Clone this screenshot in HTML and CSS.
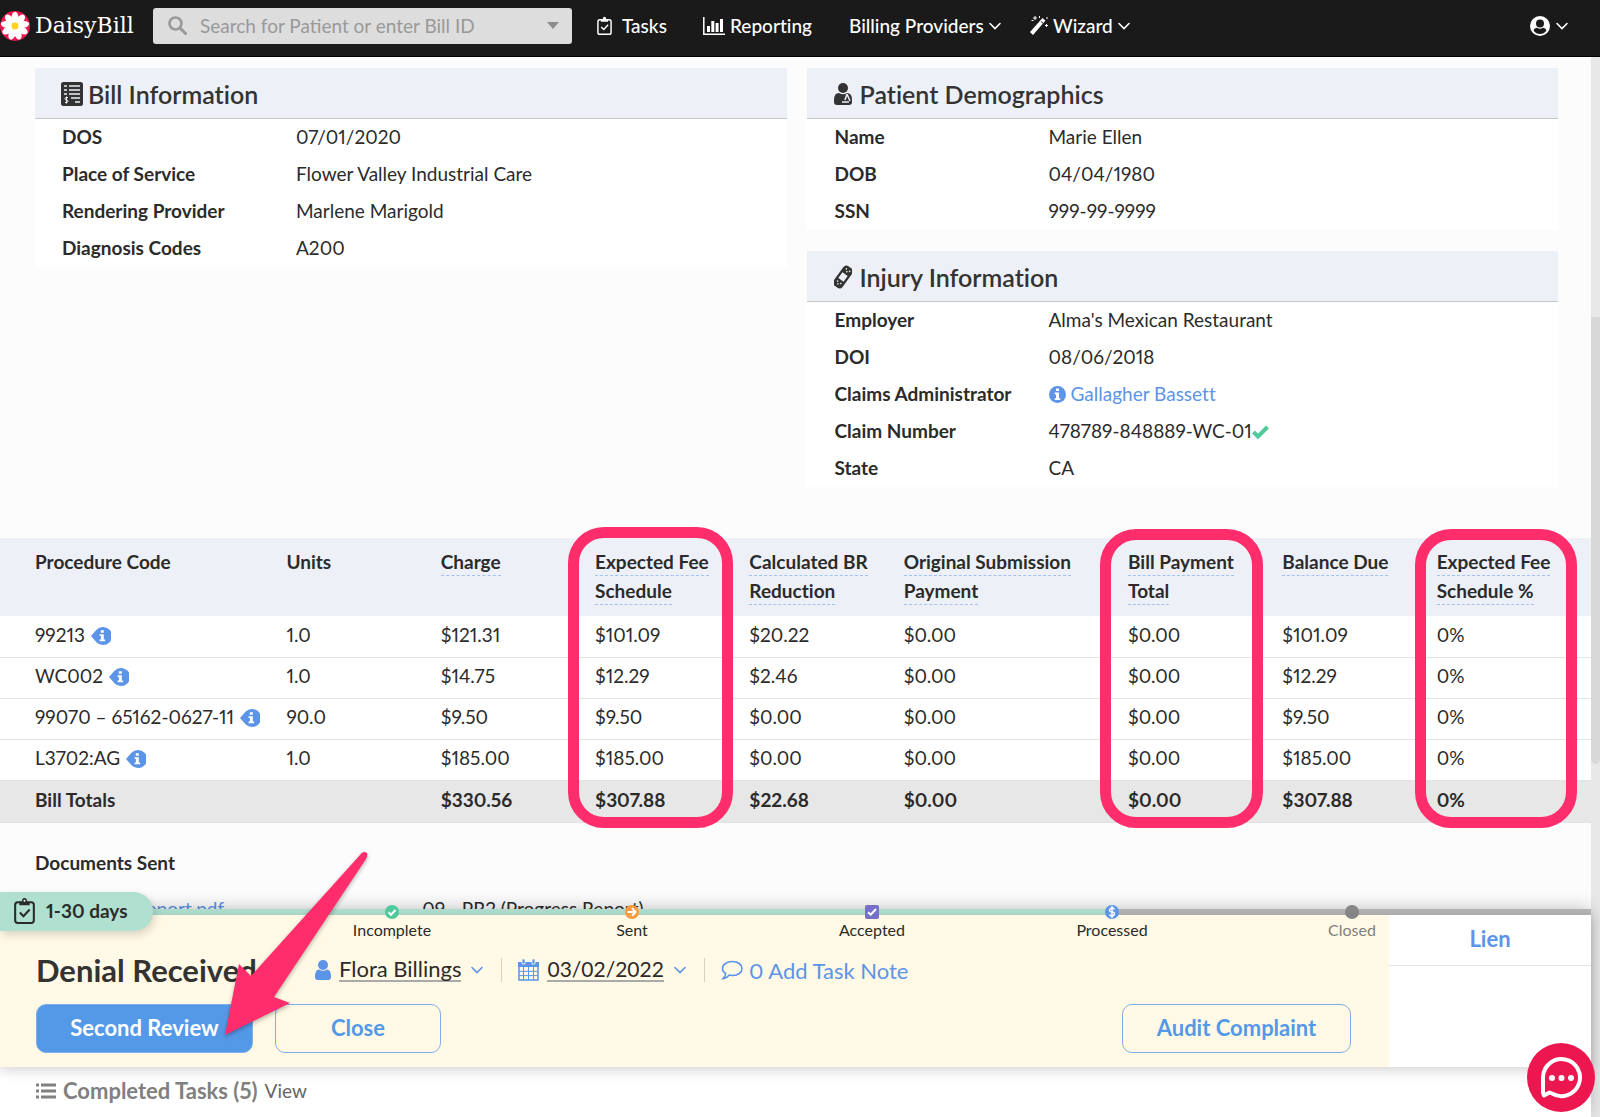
FILE: index.html
```html
<!DOCTYPE html>
<html lang="en">
<head>
    <meta charset="UTF-8">
    <meta name="viewport" content="width=device-width, initial-scale=1.0">
    <title>DaisyBill</title>
    <link rel="stylesheet" href="styles.css">
</head>
<body>
    <!-- shared icons -->
    <svg class="sprite" aria-hidden="true">
        <symbol id="chevron" viewBox="0 0 12 8"><path d="M1 1.5l5 5 5-5" fill="none" stroke="currentColor" stroke-width="1.6" stroke-linecap="round"/></symbol>
        <symbol id="clipboard" viewBox="0 0 20 26"><path d="M3.500 5H16.500Q19 5 19 7.500V22.500Q19 25 16.500 25H3.500Q1 25 1 22.500V7.500Q1 5 3.500 5Z" fill="none" stroke="currentColor" stroke-width="2"/><path d="M5 8V4.500H7.500Q7.500 1 10 1T12.500 4.500H15V8Z" fill="currentColor"/><circle cx="10" cy="3.600" r="1" fill="#fff"/><path d="M5.500 15l3.500 3.500 6-6.500" fill="none" stroke="currentColor" stroke-width="2"/></symbol>
        <symbol id="tag" viewBox="0 0 20 18"><path d="M0 9L5.500 2.800A9 9 0 1 1 5.500 15.200Z" fill="#5c94e8"/><path d="M9.800 3.200h3v2.600h-3zM8.600 7.200h4.200v5.400h1.300v1.700H8.600v-1.700h1.300V8.900H8.600z" fill="#fff"/></symbol>
    </svg>

    <header class="topbar">
        <a class="logo" href="#">
            <svg width="30" height="32" viewBox="0 0 30 32">
                <circle cx="15" cy="16" r="15" fill="#ed174f"/>
                <g fill="#fff">
                    <ellipse cx="15" cy="7.500" rx="3.400" ry="5.800"/>
                    <ellipse cx="15" cy="7.500" rx="3.400" ry="5.800" transform="rotate(40 15 16)"/>
                    <ellipse cx="15" cy="7.500" rx="3.400" ry="5.800" transform="rotate(80 15 16)"/>
                    <ellipse cx="15" cy="7.500" rx="3.400" ry="5.800" transform="rotate(120 15 16)"/>
                    <ellipse cx="15" cy="7.500" rx="3.400" ry="5.800" transform="rotate(160 15 16)"/>
                    <ellipse cx="15" cy="7.500" rx="3.400" ry="5.800" transform="rotate(200 15 16)"/>
                    <ellipse cx="15" cy="7.500" rx="3.400" ry="5.800" transform="rotate(240 15 16)"/>
                    <ellipse cx="15" cy="7.500" rx="3.400" ry="5.800" transform="rotate(280 15 16)"/>
                    <ellipse cx="15" cy="7.500" rx="3.400" ry="5.800" transform="rotate(320 15 16)"/>
                </g>
                <circle cx="15" cy="16" r="3.400" fill="#ffd21a"/>
            </svg>
            <span>DaisyBill</span>
        </a>
        <label class="search" for="search">
            <svg width="19" height="19" viewBox="0 0 19 19"><circle cx="7.500" cy="7.500" r="6" fill="none" stroke="#999" stroke-width="2.600"/><path d="M12 12l5.500 5.500" stroke="#999" stroke-width="3" stroke-linecap="round"/></svg>
            <input type="text" id="search" placeholder="Search for Patient or enter Bill ID">
            <svg width="12" height="7" viewBox="0 0 12 7"><path d="M0 0h12L6 7z" fill="#8c8c8c"/></svg>
        </label>
        <nav class="nav">
            <a class="navTasks" href="#"><svg width="15" height="19"><use href="#clipboard"/></svg>Tasks</a>
            <a class="navReporting" href="#"><svg width="22" height="18" viewBox="0 0 22 18"><path d="M.800 0v17.200H22" fill="none" stroke="#fff" stroke-width="1.500"/><path d="M4 9h3v6H4zM8.300 4h3v11h-3zM12.600 6h3v9h-3zM17 2h3v13h-3z" fill="#fff"/></svg>Reporting</a>
            <a class="navProviders" href="#">Billing Providers<svg width="12" height="8"><use href="#chevron"/></svg></a>
            <a class="navWizard" href="#"><svg width="18" height="19" viewBox="0 0 18 19"><path d="M0 16L12.500 2l3 2.600L3 19z" fill="#fff"/><path d="M11 5.500l2.600 2.300" stroke="#1a1a1a"/><path d="M5 0v4M3 2h4M9.500 0v2M1.500 4.500h2M16.500 8v3M15 9.500h3M17 1v2" stroke="#fff" stroke-width="1"/></svg>Wizard<svg width="12" height="8"><use href="#chevron"/></svg></a>
        </nav>
        <button class="account" aria-label="Account">
            <svg width="20" height="20" viewBox="0 0 20 20"><circle cx="10" cy="10" r="10" fill="#fff"/><circle cx="10" cy="7.500" r="4" fill="#1a1a1a"/><path d="M3.500 14.500Q4.500 11.500 7 11.700Q10 13.800 13 11.700Q15.500 11.500 16.500 14.500Q14 18 10 18T3.500 14.500Z" fill="#1a1a1a"/></svg>
            <svg width="12" height="8"><use href="#chevron"/></svg>
        </button>
    </header>

    <div class="shell">
        <div class="page">
            <main class="content">
                <div class="panels">
                    <div class="column">
                        <section class="panel bill">
                            <h2><svg width="22" height="24" viewBox="0 0 22 24"><rect width="22" height="24" rx="2.500" fill="#333"/><path d="M3 4h3M8 4h11M3 8h3M8 8h11M3 12h3M8 12h11M10 16h9M14 20h5" stroke="#edf1f7" stroke-width="1.500"/><path d="M7 15.500H5.500Q4 15.500 4 16.700T5.500 18T7 19.200T5.500 20.500H4M5.500 14.500v7" fill="none" stroke="#edf1f7" stroke-width="1"/></svg>Bill Information</h2>
                            <dl>
                                <dt>DOS</dt><dd>07/01/2020</dd>
                                <dt>Place of Service</dt><dd>Flower Valley Industrial Care</dd>
                                <dt>Rendering Provider</dt><dd>Marlene Marigold</dd>
                                <dt>Diagnosis Codes</dt><dd>A200</dd>
                            </dl>
                        </section>
                    </div>
                    <div class="column">
                        <section class="panel">
                            <h2><svg width="18" height="22" viewBox="0 0 18 22"><circle cx="9" cy="5" r="5" fill="#333"/><path d="M0 17Q0 10 5 10Q9 12.500 13 10Q18 10 18 17V19Q18 22 15 22H3Q0 22 0 19Z" fill="#333"/><path d="M13 11l-2 6M13 11l3 7M8 19h7" stroke="#edf1f7" stroke-width="1.500"/></svg>Patient Demographics</h2>
                            <dl>
                                <dt>Name</dt><dd>Marie Ellen</dd>
                                <dt>DOB</dt><dd>04/04/1980</dd>
                                <dt>SSN</dt><dd>999-99-9999</dd>
                            </dl>
                        </section>
                        <section class="panel">
                            <h2><svg width="18" height="24" viewBox="0 0 18 24"><g transform="rotate(36 9 12)"><rect x="3.500" y="0" width="11" height="24" rx="4" fill="#333"/><rect x="5.800" y="8.500" width="6.400" height="7" fill="#edf1f7"/><g fill="#edf1f7"><circle cx="7" cy="3.500" r=".800"/><circle cx="11" cy="3.500" r=".800"/><circle cx="9" cy="5.500" r=".800"/><circle cx="7" cy="18.500" r=".800"/><circle cx="11" cy="18.500" r=".800"/><circle cx="9" cy="20.500" r=".800"/></g></g></svg>Injury Information</h2>
                            <dl>
                                <dt>Employer</dt><dd>Alma's Mexican Restaurant</dd>
                                <dt>DOI</dt><dd>08/06/2018</dd>
                                <dt>Claims Administrator</dt><dd><a href="#"><svg class="infoDot" width="17" height="17" viewBox="0 0 17 17"><circle cx="8.500" cy="8.500" r="8.500" fill="#5c94e8"/><path d="M7 2.500h3v2.600H7zM5.700 6.600H10v5.600h1.300V14H5.700v-1.800H7V8.400H5.700z" fill="#fff"/></svg>Gallagher Bassett</a></dd>
                                <dt>Claim Number</dt><dd>478789-848889-WC-01<svg class="valid" width="17" height="14" viewBox="0 0 17 14"><path d="M1.500 7l4.500 4.500L15.500 2" fill="none" stroke="#50ca9b" stroke-width="4"/></svg></dd>
                                <dt>State</dt><dd>CA</dd>
                            </dl>
                        </section>
                    </div>
                </div>

                <div class="procedures">
                    <table>
                        <colgroup>
                            <col class="codeCol"><col><col><col><col><col class="wideCol"><col><col><col>
                        </colgroup>
                        <thead>
                            <tr>
                                <th>Procedure Code</th>
                                <th>Units</th>
                                <th><span>Charge</span></th>
                                <th><span>Expected Fee Schedule</span></th>
                                <th><span>Calculated BR Reduction</span></th>
                                <th><span>Original Submission Payment</span></th>
                                <th><span>Bill Payment Total</span></th>
                                <th><span>Balance Due</span></th>
                                <th><span>Expected Fee Schedule %</span></th>
                            </tr>
                        </thead>
                        <tbody>
                            <tr><td>99213<svg class="tag" width="20" height="18"><use href="#tag"/></svg></td><td>1.0</td><td>$121.31</td><td>$101.09</td><td>$20.22</td><td>$0.00</td><td>$0.00</td><td>$101.09</td><td>0%</td></tr>
                            <tr><td>WC002<svg class="tag" width="20" height="18"><use href="#tag"/></svg></td><td>1.0</td><td>$14.75</td><td>$12.29</td><td>$2.46</td><td>$0.00</td><td>$0.00</td><td>$12.29</td><td>0%</td></tr>
                            <tr><td>99070 – 65162-0627-11<svg class="tag" width="20" height="18"><use href="#tag"/></svg></td><td>90.0</td><td>$9.50</td><td>$9.50</td><td>$0.00</td><td>$0.00</td><td>$0.00</td><td>$9.50</td><td>0%</td></tr>
                            <tr><td>L3702:AG<svg class="tag" width="20" height="18"><use href="#tag"/></svg></td><td>1.0</td><td>$185.00</td><td>$185.00</td><td>$0.00</td><td>$0.00</td><td>$0.00</td><td>$185.00</td><td>0%</td></tr>
                        </tbody>
                        <tfoot>
                            <tr><td>Bill Totals</td><td></td><td>$330.56</td><td>$307.88</td><td>$22.68</td><td>$0.00</td><td>$0.00</td><td>$307.88</td><td>0%</td></tr>
                        </tfoot>
                    </table>
                    <div class="ring ringFee"></div>
                    <div class="ring ringPayment"></div>
                    <div class="ring ringPercent"></div>
                </div>

                <section class="documents">
                    <h3>Documents Sent</h3>
                    <div class="docRow">
                        <a href="#">report.pdf</a>
                        <span>09 - PR2 (Progress Report)</span>
                    </div>
                </section>
            </main>

            <footer class="dock">
                <div class="line"></div>
                <div class="badge"><svg width="21" height="27"><use href="#clipboard"/></svg>1-30 days</div>
                <div class="dockBody">
                    <div class="task">
                        <ol class="steps">
                            <li><svg width="14" height="14" viewBox="0 0 14 14"><circle cx="7" cy="7" r="7" fill="#50ca9b"/><path d="M3.500 7.200l2.500 2.500 4.500-4.700" fill="none" stroke="#fff" stroke-width="2"/></svg>Incomplete</li>
                            <li><svg width="14" height="14" viewBox="0 0 14 14"><circle cx="7" cy="7" r="7" fill="#fb9a3c"/><path d="M2.500 7h8M7 3.300L10.700 7 7 10.700" fill="none" stroke="#fff" stroke-width="2"/></svg>Sent</li>
                            <li><svg width="14" height="14" viewBox="0 0 14 14"><rect width="14" height="14" rx="2" fill="#766fc8"/><path d="M3 7.200l2.800 2.500L11 4" fill="none" stroke="#fff" stroke-width="2"/></svg>Accepted</li>
                            <li><svg width="14" height="14" viewBox="0 0 14 14"><circle cx="7" cy="7" r="7" fill="#5c94e8"/><path d="M9.500 4.500Q9 3 7 3T4.600 5T7 7T9.400 9T7 11T4.500 9.500M7 1v12" fill="none" stroke="#fff" stroke-width="1.500"/></svg>Processed</li>
                            <li class="pending"><svg width="14" height="14" viewBox="0 0 14 14"><circle cx="7" cy="7" r="7" fill="#858585"/></svg>Closed</li>
                        </ol>
                        <div class="taskInfo">
                            <h1>Denial Received</h1>
                            <button class="picker"><svg width="16" height="20" viewBox="0 0 16 20"><circle cx="8" cy="5" r="5" fill="#5c94e8"/><path d="M0 17Q0 9.500 4 9.500Q8 12 12 9.500Q16 9.500 16 17Q16 20 13.500 20H2.500Q0 20 0 17Z" fill="#5c94e8"/></svg><span>Flora Billings</span><svg class="arrow" width="12" height="8"><use href="#chevron"/></svg></button>
                            <button class="picker dueDate"><svg width="21" height="22" viewBox="0 0 21 22"><path d="M1 4h19v17H1z" fill="none" stroke="#5c94e8" stroke-width="1.500"/><path d="M0 3h21v5H0z" fill="#5c94e8"/><path d="M4 0h3v5H4zM14 0h3v5h-3z" fill="#5c94e8" stroke="#fff9e5" stroke-width=".800"/><path d="M5.500 8v13M10.500 8v13M15.500 8v13M1 12.300h19M1 16.600h19" stroke="#5c94e8"/></svg><span>03/02/2022</span><svg class="arrow" width="12" height="8"><use href="#chevron"/></svg></button>
                            <a class="note" href="#"><svg width="22" height="20" viewBox="0 0 22 20"><path d="M11.500 1.500C17 1.500 21 4.500 21 8.500S17 15.500 11.500 15.500Q9.800 15.500 8.300 15.100Q5.500 18.500 2 18.700Q4.500 16.500 4.700 13.500Q1.500 11.500 1.500 8.500C1.500 4.500 6 1.500 11.500 1.500Z" fill="none" stroke="#5c94e8" stroke-width="1.600"/></svg>0 Add Task Note</a>
                        </div>
                        <div class="actions">
                            <button class="btn primary">Second Review</button>
                            <button class="btn close">Close</button>
                            <button class="btn audit">Audit Complaint</button>
                        </div>
                    </div>
                    <aside class="lien"><a href="#">Lien</a></aside>
                </div>
                <div class="completed">
                    <svg width="20" height="16" viewBox="0 0 20 16"><path d="M0 2h3M5 2h15M0 8h3M5 8h15M0 14h3M5 14h15" stroke="#808080" stroke-width="3"/></svg>
                    <strong>Completed Tasks (5)</strong>
                    <a href="#">View</a>
                </div>
                <svg class="pointer" width="160" height="200" viewBox="0 0 160 200"><path d="M9 192L23 121L35 133L144 12Q147 7 151 10Q152 13 150 16L58 154L74 160Z" fill="#ff2d6c"/></svg>
            </footer>
        </div>
        <div class="scrollTrack"><div class="scrollThumb"></div></div>
    </div>

    <button class="chat" aria-label="Chat"><svg width="44" height="46" viewBox="0 0 44 46"><path d="M4 37.500V22A18.500 18.500 0 1 1 13 38.500L10.500 37.500L5 40.500Z" fill="none" stroke="#fff" stroke-width="4" stroke-linejoin="round"/><g fill="#fff"><circle cx="13" cy="23" r="3"/><circle cx="22.500" cy="23" r="3"/><circle cx="32" cy="23" r="3"/></g></svg></button>
</body>
</html>
```

FILE: styles.css
```css
*
{
    box-sizing: border-box;
}
body
{
    margin: 0;
    height: 100vh;
    display: flex;
    flex-direction: column;
    overflow: hidden;
    background: #fcfcfc;
    color: #2b2b2b;
    font-family: Lato, "Open Sans", sans-serif;
    font-size: 19px;
    line-height: 29px;
    font-variant-ligatures: none;
    font-variant-numeric: proportional-nums;
}
a
{
    color: #5c94e8;
    text-decoration: none;
}
button
{
    font: inherit;
    color: inherit;
    background: none;
    border: none;
    padding: 0;
}
h1, h2, h3, dl, dd, ol
{
    margin: 0;
    padding: 0;
}
svg
{
    flex: none;
}
.sprite
{
    display: none;
}

/* top bar */
.topbar
{
    height: 57px;
    flex: none;
    display: flex;
    align-items: center;
    padding-bottom: 5px;
    background: #1a1a1a;
    border-bottom: 1px solid #000;
    color: #fff;
}
.topbar a
{
    color: #fff;
}
.logo
{
    width: 153px;
    display: flex;
    align-items: center;
    gap: 5px;
    font-family: "DejaVu Serif", serif;
    font-size: 22px;
    font-weight: 200;
}
.search
{
    width: 419px;
    height: 36px;
    display: flex;
    align-items: center;
    padding: 0 13px 0 15px;
    background: #ddd;
    border-radius: 3px;
}
.search input
{
    flex: 1;
    min-width: 0;
    padding: 0 13px;
    border: none;
    outline: none;
    background: none;
    font-family: inherit;
    font-size: 19px;
}
.search input::placeholder
{
    color: #999;
}
.nav, .nav a
{
    display: flex;
    align-items: center;
}
.nav
{
    padding-left: 25px;
}
.nav a
{
    font-weight: 500;
    gap: 5px;
}
.nav .navTasks
{
    width: 106px;
    gap: 10px;
}
.nav .navReporting
{
    width: 146px;
}
.nav .navProviders
{
    width: 181px;
}
.account
{
    margin-left: auto;
    padding-right: 32px;
    display: flex;
    align-items: center;
    gap: 6px;
}

/* page and its scroll bar */
.shell
{
    flex: 1;
    min-height: 0;
    display: flex;
}
.page
{
    flex: 1;
    min-width: 0;
    display: flex;
    flex-direction: column;
}
.content
{
    flex: 1;
    min-height: 0;
    overflow: hidden;
}
.scrollTrack
{
    width: 9px;
    background: #e8e8e8;
    padding-top: 260px;
}
.scrollThumb
{
    height: 447px;
    background: #d8d8d8;
    border-radius: 0 0 5px 5px;
}

/* information panels */
.panels
{
    display: flex;
    gap: 20px;
    padding: 11px 33px 51px 35px;
}
.column
{
    flex: 1;
    display: flex;
    flex-direction: column;
    gap: 21px;
}
.panel
{
    background: #fff;
}
.panel h2
{
    height: 51px;
    display: flex;
    align-items: center;
    gap: 8px;
    padding: 2px 27px 0;
    background: #edf1f7;
    border-bottom: 1px solid #c4c8cc;
    font-size: 25px;
    font-weight: 600;
    color: #333;
}
.panel dl
{
    display: grid;
    grid-template-columns: 214px 1fr;
    padding: 0 28px;
    line-height: 35px;
}
.bill dl
{
    grid-template-columns: 234px 1fr;
    padding: 0 27px;
}
.bill h2
{
    gap: 5px;
    padding-left: 26px;
}
.panel dt, .panel dd
{
    height: 37px;
}
.panel dt
{
    font-weight: 700;
}
.infoDot
{
    vertical-align: -2px;
    margin-right: 5px;
}
.valid
{
    vertical-align: -1px;
}

/* procedures */
.procedures
{
    position: relative;
}
table
{
    width: 100%;
    table-layout: fixed;
    border-collapse: collapse;
}
.codeCol
{
    width: 18%;
}
.wideCol
{
    width: 14.1%;
}
th
{
    padding: 9px 20px 11px 0;
    background: #edf1f7;
    text-align: left;
    vertical-align: top;
    font-weight: 700;
}
th span
{
    padding-bottom: 2px;
    border-bottom: 1px dashed #a3c2f3;
}
td
{
    height: 41px;
    padding: 0 0 4px;
    background: #fff;
    border-bottom: 1px solid #e3e3e3;
    white-space: nowrap;
}
th:first-child, td:first-child
{
    padding-left: 35px;
}
tfoot td
{
    height: 42px;
    background: #e7e7e7;
    font-weight: 700;
}
.tag
{
    margin-left: 6px;
    vertical-align: -3px;
}
.ring
{
    position: absolute;
    top: -9px;
    bottom: -5px;
    border: 11px solid #ff2d6c;
    border-radius: 36px;
}
.ringFee
{
    left: 568px;
    width: 165px;
    top: -11px;
}
.ringPayment
{
    left: 1100px;
    width: 163px;
}
.ringPercent
{
    left: 1415px;
    width: 162px;
}
.documents
{
    padding: 25px 35px;
}
.documents h3
{
    font-size: 19px;
    font-weight: 700;
}
.docRow
{
    display: flex;
    gap: 198px;
    padding: 17px 0 0 105px;
}

/* task dock */
.dock
{
    position: relative;
    flex: none;
    background: #fff;
    box-shadow: 0 -2px 16px rgba(0, 0, 0, 0.2);
}
.line
{
    height: 6px;
    background: linear-gradient(to right, #b0e0d0 70%, #b5b5b5 70%);
}
.badge
{
    position: absolute;
    top: -17px;
    left: 0;
    width: 153px;
    height: 39px;
    display: flex;
    align-items: center;
    gap: 11px;
    padding: 0 0 2px 14px;
    background: #b0e0d0;
    border-radius: 0 20px 20px 0;
    box-shadow: 2px 4px 8px rgba(0, 0, 0, 0.15);
    font-weight: 700;
}
.dockBody
{
    display: flex;
    box-shadow: 0 3px 12px rgba(0, 0, 0, 0.18);
}
.task
{
    width: 1389px;
    flex: 0 1 auto;
    height: 152px;
    background: #fff9e5;
}
.steps
{
    display: grid;
    grid-template-columns: repeat(5, 240px);
    margin: -10px 0 0 272px;
    list-style: none;
    font-size: 16px;
    line-height: 20px;
}
.steps li
{
    display: flex;
    flex-direction: column;
    align-items: center;
    gap: 1px;
}
.pending
{
    color: #808080;
}
.taskInfo
{
    display: flex;
    align-items: center;
    height: 40px;
    margin-top: 10px;
    padding-left: 36px;
    font-size: 22px;
}
.taskInfo h1
{
    width: 279px;
    font-size: 31px;
    font-weight: 700;
    color: #333;
}
.picker
{
    display: flex;
    align-items: center;
    gap: 8px;
    padding-right: 18px;
    margin-right: 16px;
    border-right: 1px solid #d6d2c2;
    font-size: 22px;
    line-height: 22px;
}
.dueDate
{
    font-size: 21px;
    font-variant-numeric: tabular-nums;
}
.picker span
{
    border-bottom: 2px solid #aaa;
}
.arrow
{
    color: #5c94e8;
    margin-left: 2px;
}
.note
{
    display: flex;
    align-items: center;
    gap: 6px;
}
.actions
{
    display: flex;
    gap: 22px;
    padding: 14px 38px 0 36px;
}
.btn
{
    height: 49px;
    padding-bottom: 2px;
    border: 1px solid #80aeea;
    border-radius: 10px;
    color: #5499e8;
    font-size: 22px;
    font-weight: 700;
}
.primary
{
    width: 217px;
    background: #5499e8;
    color: #fff;
}
.close
{
    width: 166px;
}
.audit
{
    width: 229px;
    margin-left: auto;
}
.lien
{
    flex: 1;
    background: #fff;
    text-align: center;
    font-size: 22px;
    font-weight: 700;
}
.lien a
{
    display: block;
    padding: 9px 0 12px;
    border-bottom: 1px solid #e3e3e3;
}
.completed
{
    height: 50px;
    display: flex;
    align-items: center;
    gap: 7px;
    padding: 0 0 3px 36px;
    color: #808080;
}
.completed strong
{
    font-size: 22px;
    font-weight: 700;
}
.completed a
{
    color: #666;
}
.pointer
{
    position: absolute;
    left: 216px;
    top: -66px;
    filter: drop-shadow(0 2px 2px rgba(0, 0, 0, 0.3));
}
.chat
{
    position: fixed;
    right: 5px;
    bottom: 5px;
    width: 68px;
    height: 69px;
    display: flex;
    align-items: center;
    justify-content: center;
    background: #ed174f;
    border-radius: 50%;
}
```
